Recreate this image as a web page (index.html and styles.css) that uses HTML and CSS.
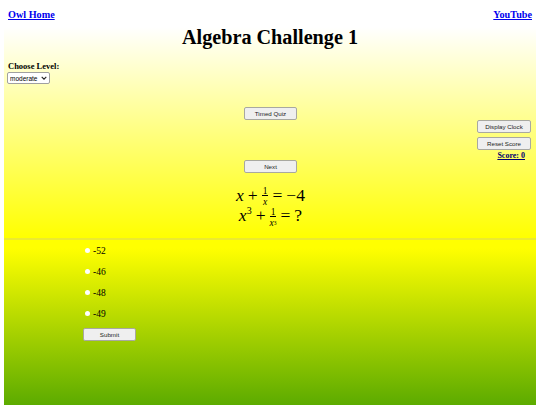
FILE: index.html
```html
<!DOCTYPE html>
<html lang="en">

<head>
    <meta charset="UTF-8">
    <meta name="viewport" content="width=device-width, initial-scale=1.0">
    <title>Algebra Challenge 1</title>
    <link rel="stylesheet" href="styles.css">
</head>

<body>
    <div class="topLinks">
        <a href="#">Owl Home</a>
        <a href="#">YouTube</a>
    </div>

    <div class="upper">
        <h1>Algebra Challenge 1</h1>
        <div class="board">
            <div class="levelBox">
                <label for="level">Choose Level:</label>
                <div class="selectWrap">
                    <select id="level">
                        <option>moderate</option>
                        <option>easy</option>
                        <option>hard</option>
                    </select>
                    <svg class="chevron" width="6" height="4" viewBox="0 0 6 4"><path d="M0.7 0.8 L3 3.1 L5.3 0.8" fill="none" stroke="#222" stroke-width="1.1"/></svg>
                </div>
            </div>
            <div class="quizBox">
                <button class="btn" type="button">Timed Quiz</button>
                <button class="btn nextBtn" type="button">Next</button>
                <div class="math">
                    <div class="mathLine">
                        <i>x</i><span class="op">+</span><span class="frac"><span class="num">1</span><span class="den"><i>x</i></span></span><span class="op">=</span>&minus;4
                    </div>
                    <div class="mathLine">
                        <i>x</i><sup>3</sup><span class="op">+</span><span class="frac"><span class="num">1</span><span class="den"><i>x</i><sup>3</sup></span></span><span class="op">=</span>?
                    </div>
                </div>
            </div>
            <div class="sideBox">
                <button class="btn wideBtn" type="button">Display Clock</button>
                <button class="btn wideBtn" type="button">Reset Score</button>
                <a class="score" href="#">Score: 0</a>
            </div>
        </div>
    </div>

    <hr>

    <div class="lower">
        <form class="answers">
            <label class="answer"><input type="radio" name="answer"> -52</label>
            <label class="answer"><input type="radio" name="answer"> -46</label>
            <label class="answer"><input type="radio" name="answer"> -48</label>
            <label class="answer"><input type="radio" name="answer"> -49</label>
            <button class="btn submitBtn" type="button">Submit</button>
        </form>
    </div>
</body>

</html>
```

FILE: styles.css
```css
html,
body {
    height: 405px;
    overflow: hidden;
}

body {
    font-family: "Liberation Serif", serif;
    background-color: white;
    margin: 0 4px;
    color: black;
}

.topLinks {
    display: flex;
    justify-content: space-between;
    height: 27px;
    padding: 8px 4px 0;
    box-sizing: border-box;
    font-size: 10.2px;
    font-weight: bold;
    line-height: 13px;
}

.topLinks a {
    color: #0000ee;
}

.upper {
    height: 211px;
    background: linear-gradient(white, yellow);
}

h1 {
    margin: 0;
    text-align: center;
    font-size: 20.2px;
    line-height: 20px;
}

.board {
    display: grid;
    grid-template-columns: 1fr auto 1fr;
    padding-top: 13px;
}

.levelBox {
    display: flex;
    flex-direction: column;
    align-items: flex-start;
    padding-left: 4px;
    font-size: 8.5px;
    font-weight: bold;
    line-height: 12px;
}

.selectWrap {
    position: relative;
    width: 43px;
    height: 12px;
    margin-left: -1px;
}

select {
    appearance: none;
    display: block;
    width: 43px;
    height: 12px;
    padding: 0 0 0 2px;
    font-family: "Liberation Sans", sans-serif;
    font-size: 6.5px;
    background-color: white;
    border: 1px solid #a0a0a0;
    border-radius: 2px;
}

.chevron {
    position: absolute;
    top: 4px;
    right: 3px;
}

.btn {
    display: block;
    width: 53px;
    height: 13px;
    padding: 0;
    font-family: "Liberation Sans", sans-serif;
    font-size: 6.2px;
    color: #222;
    background-color: #efefef;
    border: 1px solid #a8a8a0;
    border-radius: 2px;
}

.wideBtn {
    width: 54px;
}

.quizBox {
    display: flex;
    flex-direction: column;
    align-items: center;
    padding: 47px 0 0 1px;
}

.nextBtn {
    margin-top: 40px;
}

.math {
    margin-top: 13px;
    font-size: 17.5px;
    line-height: 18px;
    text-align: center;
}

.mathLine {
    white-space: nowrap;
}

.op {
    margin: 0 4px;
}

.mathLine sup {
    font-size: 10px;
    line-height: 0;
}

.frac {
    display: inline-flex;
    flex-direction: column;
    align-items: center;
    vertical-align: middle;
    font-size: 9.5px;
    line-height: 8px;
}

.mathLine .frac sup {
    font-size: 5.5px;
    vertical-align: 1px;
}

.num {
    align-self: stretch;
    padding: 0 1px;
    border-bottom: 1px solid black;
}

.den {
    padding-top: 2px;
}

.sideBox {
    display: flex;
    flex-direction: column;
    align-items: flex-end;
    gap: 4px;
    padding: 60px 5px 0 0;
}

.score {
    margin: -3px 6px 0 0;
    font-size: 8px;
    font-weight: bold;
    line-height: 10px;
    color: #000070;
}

hr {
    height: 2px;
    margin: 0;
    border: none;
    background-color: #ecea30;
}

.lower {
    height: 165px;
    background: linear-gradient(yellow 5%, #5cab00);
}

.answers {
    display: flex;
    flex-direction: column;
    align-items: flex-start;
    padding: 0 0 0 79px;
}

.answer {
    display: flex;
    align-items: center;
    gap: 3px;
    height: 21px;
    padding-left: 2px;
    font-size: 9.5px;
}

.answer input {
    appearance: none;
    width: 5px;
    height: 5px;
    margin: 0;
    background-color: white;
    border: none;
    border-radius: 50%;
}

.submitBtn {
    margin-top: 4px;
}
```
